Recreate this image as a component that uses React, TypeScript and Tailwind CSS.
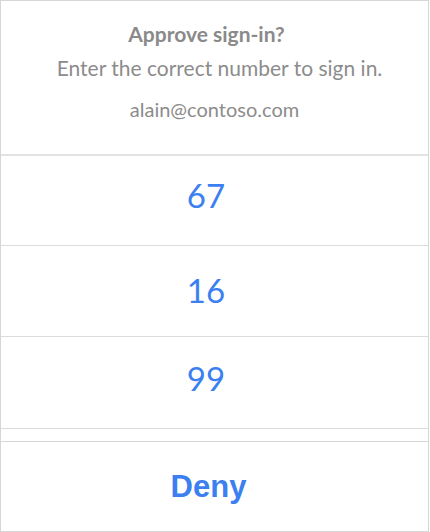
const numbers = ['67', '16', '99'];

export default function App() {
  return (
    <div className="w-[430px] h-[532px] bg-white">
      <div className="w-[429px] h-[532px] border border-[#d6d6d6] flex flex-col bg-white">
        {/* Header */}
        <div className="h-[153px] flex flex-col items-center font-['Lato',sans-serif] text-[#8c8c8c]">
          <h1 className="mt-[20px] pr-[16px] text-[21px] leading-[26px] font-bold text-[#8a8a8a]">
            Approve sign-in?
          </h1>
          <p className="mt-[7px] pl-[10px] text-[21px] leading-[28px]">
            Enter the correct number to sign in.
          </p>
          <p className="mt-[15px] text-[20px] leading-[24px]">alain@contoso.com</p>
        </div>
        <div className="h-[2px] bg-[#e3e3e3]" />

        {/* Number choices */}
        {numbers.map((n, i) => (
          <button
            key={n}
            className={`flex items-center justify-center pr-[17px] font-['Lato',sans-serif] text-[33px] text-[#3b7ff0] border-b border-[#dcdcdc] ${
              i === 0 ? 'h-[90px] pb-[10px]' : i === 1 ? 'h-[91px] pb-[1px]' : 'h-[92px] pb-[8px]'
            }`}
          >
            {n}
          </button>
        ))}

        <div className="h-[13px] border-b border-[#d6d6d6]" />

        {/* Deny */}
        <button className="flex-1 flex items-center justify-center pr-[12px] pt-[2px] font-['Liberation_Sans',sans-serif] font-bold text-[31px] text-[#3b7ff0]">
          Deny
        </button>
      </div>
    </div>
  );
}
